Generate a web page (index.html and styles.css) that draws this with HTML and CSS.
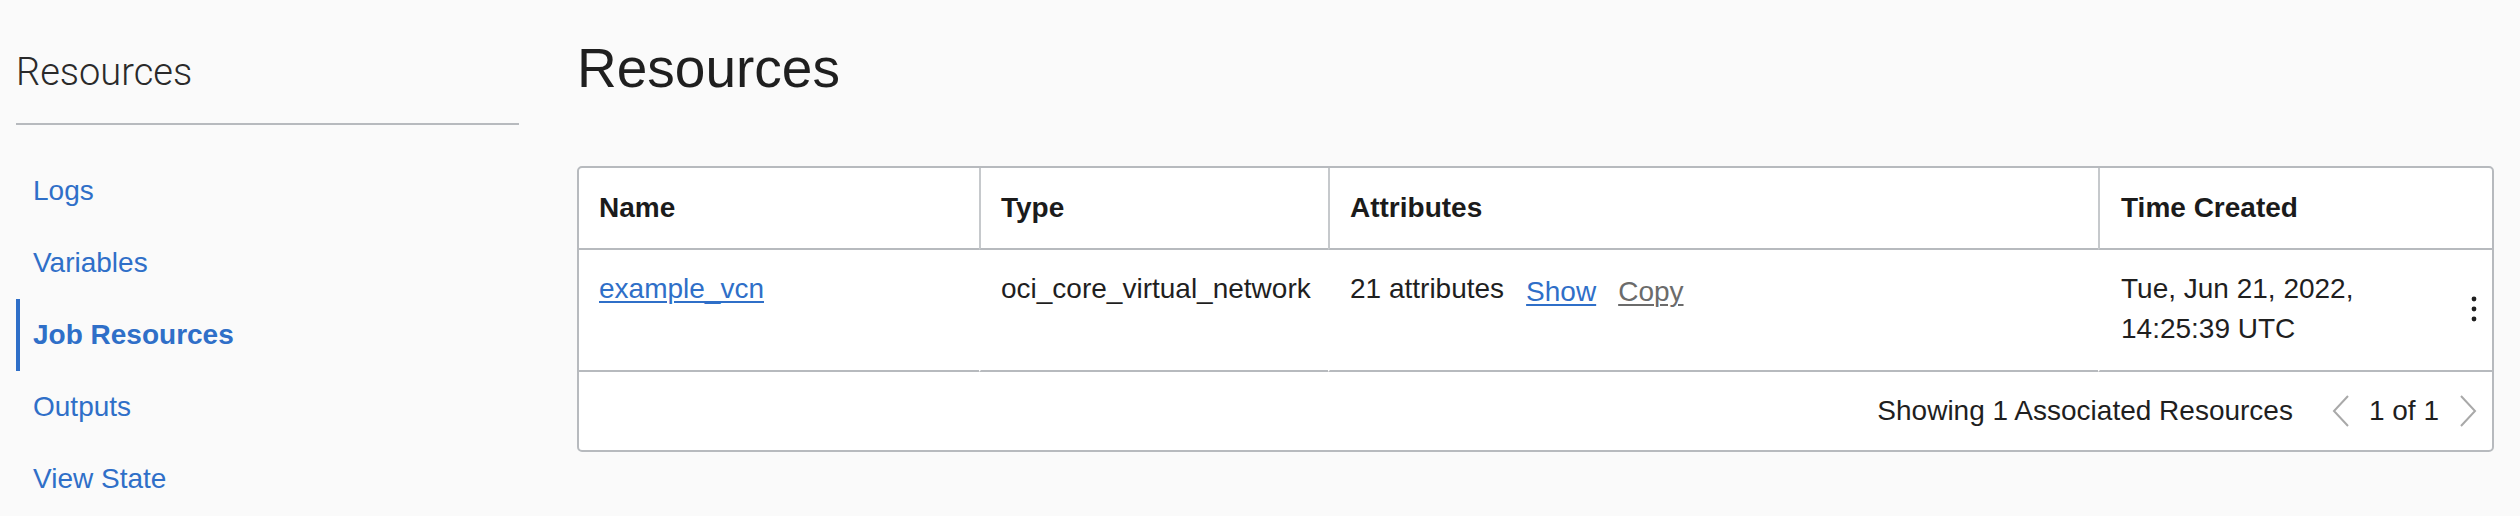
FILE: index.html
```html
<!DOCTYPE html>
<html lang="en">
<head>
<meta charset="utf-8">
<title>Job Resources</title>
<link rel="stylesheet" href="styles.css">
</head>
<body>
<div class="page">
  <aside class="sidebar">
    <h2 class="side-title">Resources</h2>
    <div class="side-divider"></div>
    <ul class="side-nav">
      <li><a class="side-link" href="#">Logs</a></li>
      <li><a class="side-link" href="#">Variables</a></li>
      <li><a class="side-link active" href="#">Job Resources</a></li>
      <li><a class="side-link" href="#">Outputs</a></li>
      <li><a class="side-link" href="#">View State</a></li>
    </ul>
  </aside>
  <main class="content">
    <h1 class="page-title">Resources</h1>
    <div class="table-card">
      <table class="res-table">
        <colgroup>
          <col class="c-name">
          <col class="c-type">
          <col class="c-attr">
          <col class="c-time">
        </colgroup>
        <thead>
          <tr>
            <th>Name</th>
            <th>Type</th>
            <th>Attributes</th>
            <th>Time Created</th>
          </tr>
        </thead>
        <tbody>
          <tr>
            <td><a class="link" href="#">example_vcn</a></td>
            <td>oci_core_virtual_network</td>
            <td>21 attributes<a class="link action" href="#">Show</a><a class="link action copy" href="#">Copy</a></td>
            <td>
              <div class="time-wrap">
                <span>Tue, Jun 21, 2022,<br>14:25:39 UTC</span>
                <svg class="kebab" width="6" height="26" viewBox="0 0 6 26" aria-hidden="true"><circle cx="3" cy="3" r="2.4"/><circle cx="3" cy="13" r="2.4"/><circle cx="3" cy="23" r="2.4"/></svg>
              </div>
            </td>
          </tr>
        </tbody>
      </table>
      <div class="table-footer">
        <span class="count">Showing 1 Associated Resources</span>
        <svg class="chev" width="18" height="32" viewBox="0 0 18 32" aria-hidden="true"><polyline points="16,1 2,16 16,31"/></svg>
        <span class="pages">1 of 1</span>
        <svg class="chev" width="18" height="32" viewBox="0 0 18 32" aria-hidden="true"><polyline points="2,1 16,16 2,31"/></svg>
      </div>
    </div>
  </main>
</div>
</body>
</html>
```

FILE: styles.css
```css
* { box-sizing: border-box; }

body {
  margin: 0;
  background: #fafafa;
  font-family: "Liberation Sans", Arial, sans-serif;
  color: #1f1f1f;
}

.page {
  display: flex;
  align-items: flex-start;
  padding: 0 26px 0 16px;
}

.sidebar {
  flex: none;
  width: 503px;
}

.side-title {
  margin: 50px 0 0;
  font-family: Roboto, "Liberation Sans", sans-serif;
  font-weight: 300;
  font-size: 38px;
  line-height: 44px;
  color: #2a2a2a;
}

.side-divider {
  margin-top: 29px;
  height: 2px;
  background: #b7babe;
}

.side-nav {
  list-style: none;
  margin: 30px 0 0;
  padding: 0;
}

.side-link {
  display: flex;
  align-items: center;
  height: 72px;
  padding-left: 13px;
  border-left: 4px solid transparent;
  font-size: 28px;
  color: #2f6fc8;
  text-decoration: none;
}

.side-link.active {
  border-left-color: #2f6fc8;
  font-weight: 700;
}

.content {
  flex: 1;
  min-width: 0;
  margin-left: 58px;
}

.page-title {
  margin: 36px 0 0;
  font-size: 55px;
  font-weight: 400;
  line-height: 64px;
  color: #1f1f1f;
}

.table-card {
  margin-top: 66px;
  border: 2px solid #b7babe;
  border-radius: 5px;
  background: #fff;
  overflow: hidden;
}

.res-table {
  width: 100%;
  table-layout: fixed;
  border-collapse: separate;
  border-spacing: 0;
}

.c-name { width: 400px; }
.c-type { width: 349px; }
.c-attr { width: 770px; }
.c-time { width: 394px; }

.res-table th {
  text-align: left;
  font-size: 28px;
  font-weight: 700;
  line-height: 32px;
  padding: 24px 20px;
  color: #1b1b1b;
  border-bottom: 2px solid #b7babe;
}

.res-table th + th {
  border-left: 2px solid #c6c9cc;
}

.res-table th:last-child,
.res-table td:last-child {
  padding-left: 21px;
}

.res-table td {
  vertical-align: top;
  font-size: 28px;
  line-height: 40px;
  padding: 19px 20px 21px;
  border-bottom: 2px solid #b7babe;
  color: #1f1f1f;
}

.res-table td + td {
  border-left: 2px solid transparent;
}

.link {
  color: #2f6fc8;
  text-decoration: underline;
  text-decoration-thickness: 2px;
  text-underline-offset: 3px;
}

.action {
  margin-left: 22px;
  vertical-align: -3px;
}

.copy {
  color: #6b6b6b;
}

.res-table td:last-child {
  padding-right: 15px;
}

.time-wrap {
  display: flex;
  align-items: center;
  justify-content: space-between;
}

.kebab {
  flex: none;
  fill: #1f1f1f;
}

.table-footer {
  display: flex;
  justify-content: flex-end;
  align-items: center;
  height: 78px;
  padding-right: 15px;
  font-size: 28px;
  color: #1f1f1f;
}

.count {
  margin-right: 39px;
}

.pages {
  margin: 0 20px 0 19px;
}

.chev {
  flex: none;
}

.chev polyline {
  fill: none;
  stroke: #a9a9a9;
  stroke-width: 2;
}
```
